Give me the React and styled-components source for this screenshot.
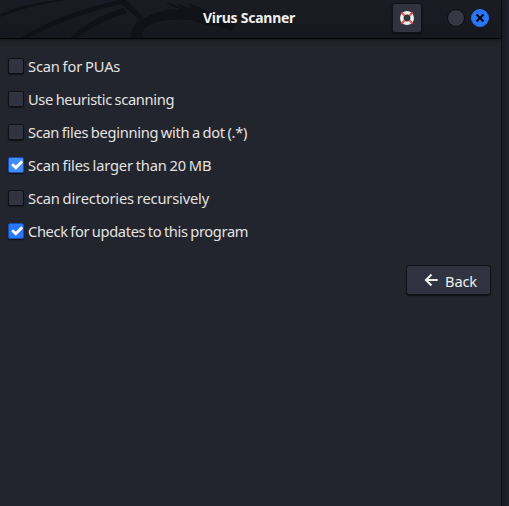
import React from "react";
import styled, { createGlobalStyle } from "styled-components";

const GlobalStyle = createGlobalStyle`
  * { box-sizing: border-box; }
  body { margin: 0; background: #1b1d26; overflow: hidden; }
  button { font: inherit; padding: 0; }
`;

const Desktop = styled.div`
  height: 506px;
  width: 509px;
  background: linear-gradient(90deg, #15171f 501px, #191c25 503px, #1e212b 509px);
  font-family: "Noto Sans", sans-serif;
  font-size: 14.67px;
  color: #e3e3e0;
`;

const Window = styled.main`
  width: 502px;
  height: 506px;
  background: #23252e;
  border-right: 1px solid #0e1016;
`;

const TitleBar = styled.header`
  position: relative;
  height: 39px;
  display: grid;
  grid-template-columns: 392px 30px 25px 18px 6px 18px;
  align-items: center;
  background: linear-gradient(#1a1c25, #17181e);
  border-bottom: 1px solid #030405;
  box-shadow: 0 1px 4px rgba(0, 0, 0, 0.45);
`;

const Dragon = styled.svg`
  position: absolute;
  left: 0;
  top: 0;
`;

const Title = styled.h1`
  position: relative;
  margin: 0;
  padding-left: 203px;
  font-size: 14px;
  line-height: 36px;
  height: 38px;
  font-weight: 700;
  letter-spacing: -0.26px;
  color: #f0f0ee;
  white-space: nowrap;
`;

const HelpButton = styled.button`
  width: 30px;
  height: 30px;
  margin-top: -2px;
  display: grid;
  place-items: center;
  border: 1px solid #111319;
  border-radius: 3px;
  background: #31343f;
  box-shadow: 0 1px 2px #08090c;
`;

const WindowButton = styled.button`
  grid-column: ${(p) => p.$column};
  width: 18px;
  height: 18px;
  margin-top: -2px;
  display: grid;
  place-items: center;
  border: 1px solid ${(p) => (p.$close ? "#2a70ed" : "#0b0c10")};
  border-radius: 50%;
  background: ${(p) => (p.$close ? "#2777ff" : "#363945")};
`;

const Options = styled.div`
  padding: 11px 0 0 8px;
`;

const Option = styled.label`
  display: flex;
  align-items: center;
  height: 33px;
  white-space: nowrap;
`;

const CheckBox = styled.span`
  flex: none;
  width: 16px;
  height: 16px;
  margin: -1px 4px 0 0;
  display: grid;
  place-items: center;
  border: 1px solid ${(p) => (p.$checked ? "#1a4fae" : "#0e1015")};
  border-radius: 2px;
  background: ${(p) => (p.$checked ? p.$fill : "#313440")};
  box-shadow: 0 1px 1px #101218;
`;

const OptionText = styled.span`
  margin-top: -2px;
  word-spacing: -0.8px;
  letter-spacing: ${(p) => p.$spacing}px;
`;

const Actions = styled.footer`
  display: flex;
  justify-content: flex-end;
  padding: 17px 10px 0 0;
`;

const BackButton = styled.button`
  width: 85px;
  height: 30px;
  display: flex;
  align-items: center;
  padding-left: 17px;
  gap: 6px;
  border: 1px solid #0f1116;
  border-radius: 3px;
  background: #313440;
  box-shadow: 0 1px 1px #101218;
  color: #eeeeec;
`;

const BackText = styled.span`
  padding-top: 2px;
  letter-spacing: -0.15px;
`;

const options = [
  { text: "Scan for PUAs", spacing: -0.15 },
  { text: "Use heuristic scanning", spacing: -0.34 },
  { text: "Scan files beginning with a dot (.*)", spacing: -0.31 },
  { text: "Scan files larger than 20 MB", spacing: -0.16, checked: true, fill: "#408bff" },
  { text: "Scan directories recursively", spacing: -0.16 },
  { text: "Check for updates to this program", spacing: -0.36, checked: true, fill: "#2777ff" },
];

export default function App() {
  return (
    <>
      <GlobalStyle />
      <Desktop>
        <Window>
          <TitleBar>
            <Dragon width="330" height="38" viewBox="0 0 330 38" fill="#111218">
              <path d="M0 14Q25 3 57 0H67Q30 5 0 17Z" />
              <path d="M20 38Q60 13 119 0H120L125 3Q74 14 28 38Z" />
              <path d="M70 38Q91 18 123 8L127 13Q98 21 77 38Z" />
              <path d="M116 0H126L144 18Q159 9 180 9L166 4L170 3L184 9L176 3Q187 8 194 9L187 3Q200 7 208 12L215 18L237 22L232 31Q219 25 207 25L190 20Q164 18 149 25Q140 31 143 38H130Q132 25 140 20Z" />
            </Dragon>
            <Title>Virus Scanner</Title>
            <HelpButton aria-label="Help">
              <svg width="16" height="16" viewBox="0 0 16 16">
                <circle cx="8" cy="8" r="5.2" fill="none" stroke="#eeeeec" strokeWidth="3.6" />
                <path d="M2.4 2.4L5.6 5.6M10.4 10.4L13.6 13.6M13.6 2.4L10.4 5.6M5.6 10.4L2.4 13.6" stroke="#e84b47" strokeWidth="2" />
              </svg>
            </HelpButton>
            <WindowButton $column={4} aria-label="Minimize" />
            <WindowButton $column={6} $close aria-label="Close">
              <svg width="10" height="10" viewBox="0 0 10 10">
                <path d="M1.5 1.5L8.5 8.5M8.5 1.5L1.5 8.5" stroke="#080b13" strokeWidth="2.3" />
              </svg>
            </WindowButton>
          </TitleBar>
          <Options>
            {options.map((o) => (
              <Option key={o.text}>
                <CheckBox $checked={o.checked} $fill={o.fill} role="checkbox" aria-checked={!!o.checked}>
                  {o.checked && (
                    <svg width="14" height="14" viewBox="0 0 14 14">
                      <path d="M3.2 6.2L6.8 9.8L13.2 3.2" fill="none" stroke="#fff" strokeWidth="2.8" />
                    </svg>
                  )}
                </CheckBox>
                <OptionText $spacing={o.spacing}>{o.text}</OptionText>
              </Option>
            ))}
          </Options>
          <Actions>
            <BackButton>
              <svg width="15" height="14" viewBox="0 0 15 14">
                <path d="M7.5 1.5L2 7L7.5 12.5M2 7H13.7" fill="none" stroke="#eeeeec" strokeWidth="2.1" />
              </svg>
              <BackText>Back</BackText>
            </BackButton>
          </Actions>
        </Window>
      </Desktop>
    </>
  );
}
